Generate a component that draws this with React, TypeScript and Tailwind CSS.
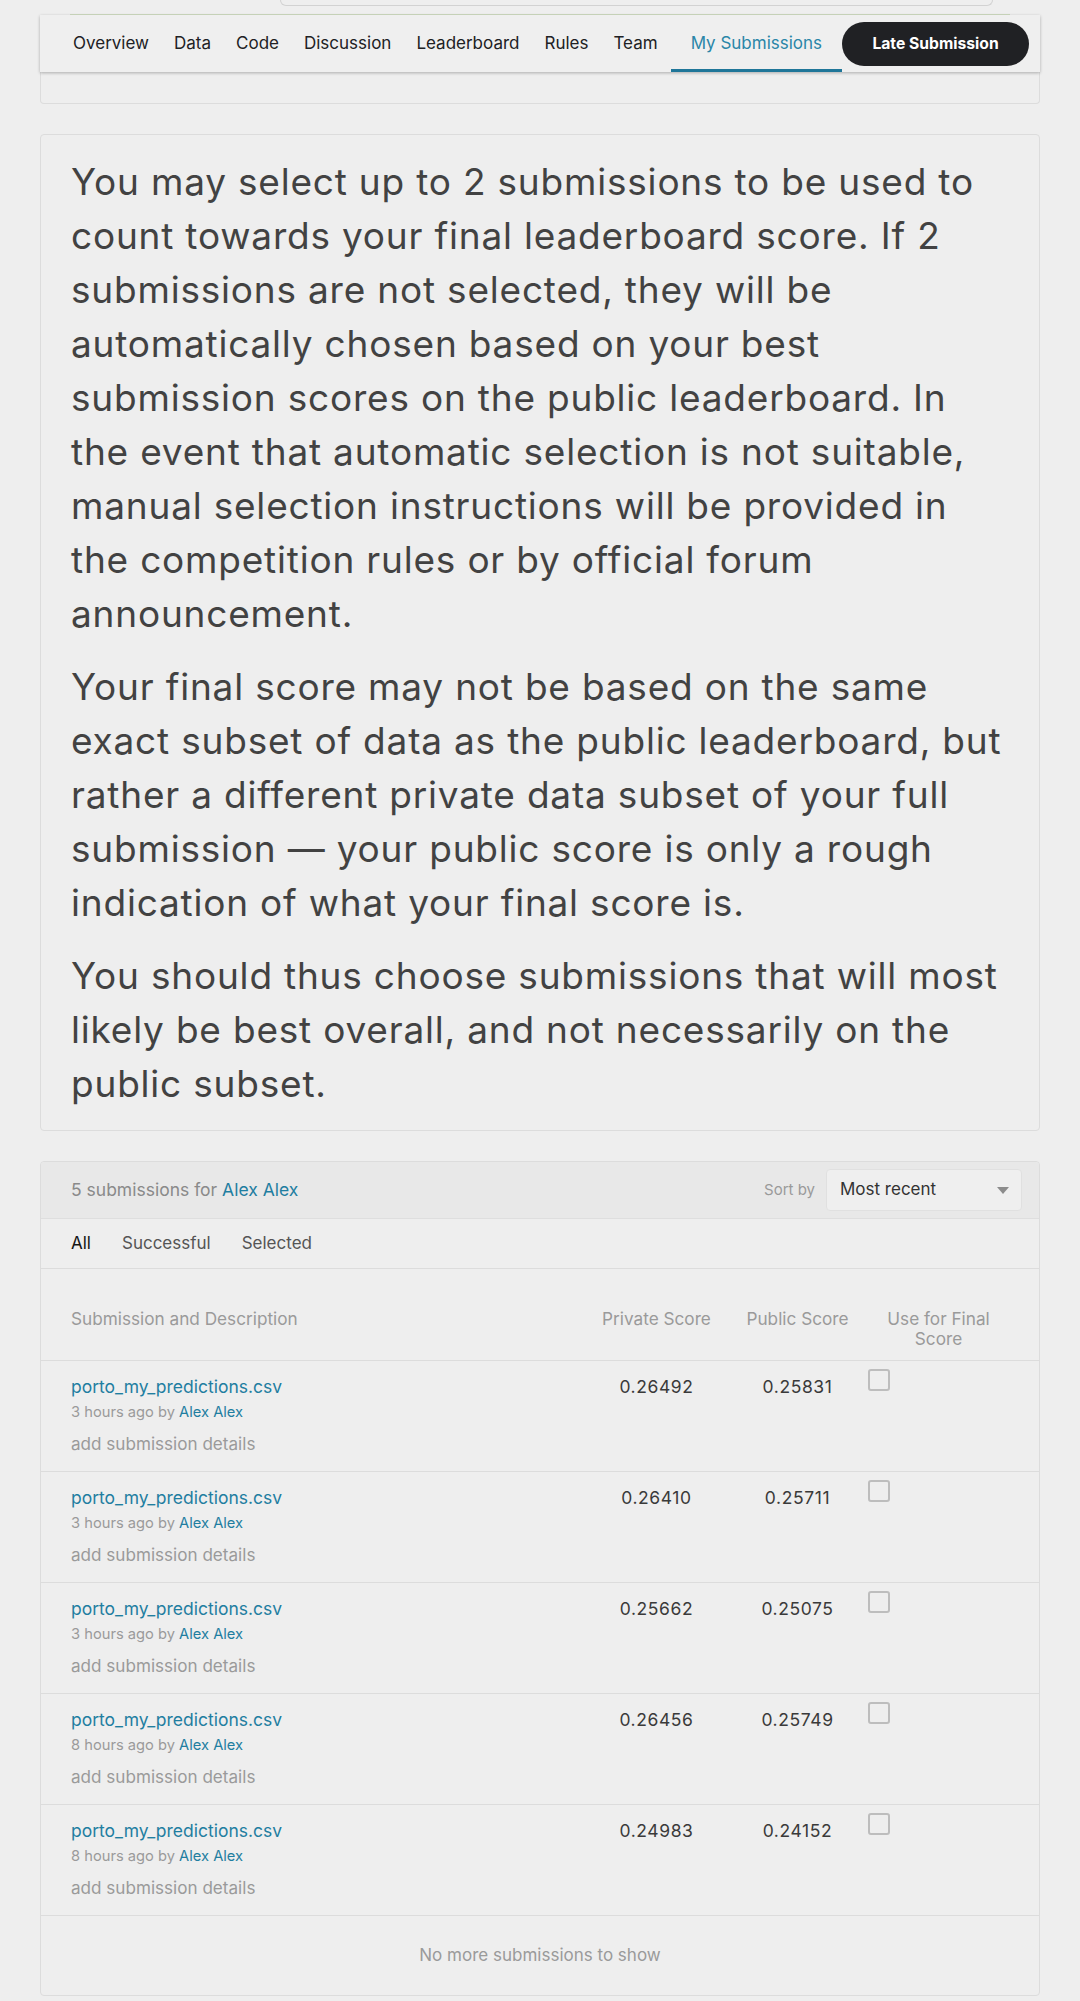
import React from "react";

const LINK = "text-[#1f7ea1]";

const rows = [
  { ago: "3 hours ago", priv: "0.26492", pub: "0.25831" },
  { ago: "3 hours ago", priv: "0.26410", pub: "0.25711" },
  { ago: "3 hours ago", priv: "0.25662", pub: "0.25075" },
  { ago: "8 hours ago", priv: "0.26456", pub: "0.25749" },
  { ago: "8 hours ago", priv: "0.24983", pub: "0.24152" },
];

const navItems = ["Overview", "Data", "Code", "Discussion", "Leaderboard", "Rules", "Team"];

const p1 = [
  "You may select up to 2 submissions to be used to",
  "count towards your final leaderboard score. If 2",
  "submissions are not selected, they will be",
  "automatically chosen based on your best",
  "submission scores on the public leaderboard. In",
  "the event that automatic selection is not suitable,",
  "manual selection instructions will be provided in",
  "the competition rules or by official forum",
  "announcement.",
];
const p2 = [
  "Your final score may not be based on the same",
  "exact subset of data as the public leaderboard, but",
  "rather a different private data subset of your full",
  "submission — your public score is only a rough",
  "indication of what your final score is.",
];
const p3 = [
  "You should thus choose submissions that will most",
  "likely be best overall, and not necessarily on the",
  "public subset.",
];

function Para({ lines, className = "" }: { lines: string[]; className?: string }) {
  return (
    <p className={`whitespace-nowrap ${className}`}>
      {lines.map((l, i) => (
        <React.Fragment key={i}>
          {l}
          {i < lines.length - 1 && <br />}
        </React.Fragment>
      ))}
    </p>
  );
}

export default function App() {
  return (
    <div className="min-h-[2001px] w-[1080px] bg-[#eeeeee] px-[40px] font-['Inter',sans-serif] text-[#444]">
      {/* top stub */}
      <div className="flex h-[15px] flex-col">
        <div className="ml-[240px] h-[6px] w-[713px] rounded-b-[20px] border-x border-b border-[#d2d2d2]" />
        <div className="mx-[30px] mt-auto h-px bg-[#cfdcc0]" />
      </div>

      {/* nav */}
      <div className="relative z-10 flex h-[57px] items-center whitespace-nowrap bg-[#efefef] pl-[33px] shadow-[0_1px_3px_rgba(0,0,0,0.28)]">
        <div className="flex shrink-0 items-center gap-[25px] text-[17px] text-[#202124]">
          {navItems.map((n) => (
            <span key={n}>{n}</span>
          ))}
        </div>
        <div className="ml-[13px] flex shrink-0 self-stretch items-center border-b-[3px] border-[#1f7699] px-[20px] pt-[3px] text-[17px] text-[#2a86a8]">
          My Submissions
        </div>
        <button className="flex h-[44px] w-[187px] shrink-0 items-center justify-center rounded-full bg-[#202124] text-[15.7px] font-bold text-white">
          Late Submission
        </button>
      </div>
      <div className="h-[32px] rounded-b-[4px] border-x border-b border-[#dcdcdc]" />

      {/* info card */}
      <div className="mt-[30px] rounded-[4px] border border-[#dcdcdc] px-[30px] pb-[19px] pt-[20px] text-[37px] leading-[54px] tracking-[0.8px] text-[#424242]">
        <Para lines={p1} />
        <Para lines={p2} className="mt-[19px]" />
        <Para lines={p3} className="mt-[19px]" />
      </div>

      {/* submissions card */}
      <div className="mt-[30px] overflow-hidden rounded-[4px] border border-[#dcdcdc]">
        <div className="flex h-[57px] items-center justify-between border-b border-[#dedede] bg-[#e8e8e8] pl-[30px] pr-[17px]">
          <div className="text-[17.5px] text-[#8a8a8a]">
            5 submissions for <span className={LINK}>Alex Alex</span>
          </div>
          <div className="flex items-center">
            <span className="mr-[11px] text-[15px] text-[#9a9a9a]">Sort by</span>
            <div className="flex h-[42px] w-[196px] items-center justify-between rounded-[4px] border border-[#e0e0e0] bg-[#efefef] pl-[13px] pr-[12px]">
              <span className="text-[17px] text-[#333]">Most recent</span>
              <svg width="12" height="7" viewBox="0 0 12 7">
                <path d="M0 0 L12 0 L6 7 Z" fill="#8c8c8c" />
              </svg>
            </div>
          </div>
        </div>

        <div className="flex h-[50px] items-center gap-[31px] border-b border-[#dcdcdc] pl-[30px] text-[17px] text-[#555]">
          <span className="text-[#151515]">All</span>
          <span>Successful</span>
          <span>Selected</span>
        </div>

        <div className="grid grid-cols-[1fr_141px_141px_141px] items-start border-b border-[#dcdcdc] px-[30px] pb-[11px] pt-[40px] text-[17.2px] leading-[20px] text-[#9a9a9a]">
          <div>Submission and Description</div>
          <div className="text-center">Private Score</div>
          <div className="text-center">Public Score</div>
          <div className="text-center">
            Use for Final
            <br />
            Score
          </div>
        </div>

        {rows.map((r, i) => (
          <div
            key={i}
            className="grid h-[111px] grid-cols-[1fr_141px_141px_141px] items-start border-b border-[#dcdcdc] px-[30px] pt-[8px]"
          >
            <div className="pt-[6px]">
              <div className={`text-[17.5px] leading-[24px] ${LINK}`}>porto_my_predictions.csv</div>
              <div className="text-[14.7px] leading-[26px] text-[#9a9a9a]">
                {r.ago} by <span className={LINK}>Alex Alex</span>
              </div>
              <div className="mt-[6px] text-[17.1px] leading-[25px] text-[#9a9a9a]">add submission details</div>
            </div>
            <div className="pt-[6px] text-center text-[17.5px] leading-[24px] tracking-[0.6px] text-[#3a3a3a]">
              {r.priv}
            </div>
            <div className="pt-[6px] text-center text-[17.5px] leading-[24px] tracking-[0.6px] text-[#3a3a3a]">
              {r.pub}
            </div>
            <div>
              <div className="h-[22px] w-[22px] rounded-[3px] border-2 border-[#bdbdbd]" />
            </div>
          </div>
        ))}

        <div className="flex h-[79px] items-center justify-center text-[17px] text-[#9a9a9a]">
          No more submissions to show
        </div>
      </div>
    </div>
  );
}
